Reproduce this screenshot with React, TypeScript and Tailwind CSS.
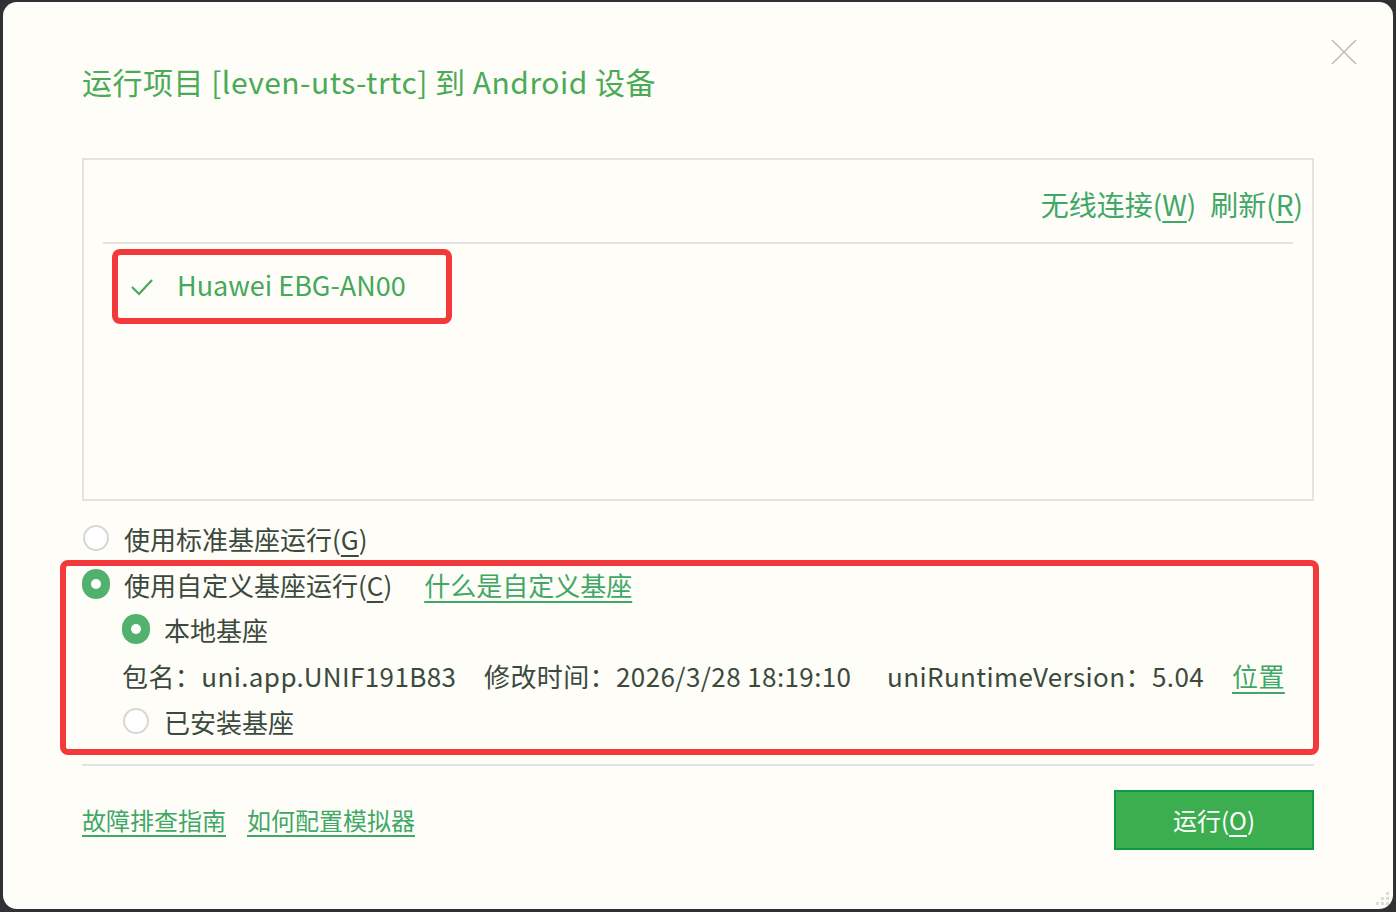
import React from "react";

const font = {
  fontFamily: '"Noto Sans CJK SC", "Microsoft YaHei", "Noto Sans", sans-serif',
};

function Radio({ checked }: { checked?: boolean }) {
  return (
    <div className="w-[28px] h-[30px] flex items-center justify-center shrink-0">
      {checked ? (
        <div className="w-[30px] h-[30px] rounded-full bg-[#53b16e] flex items-center justify-center">
          <div className="w-[10px] h-[10px] rounded-full bg-white" />
        </div>
      ) : (
        <div className="w-[26px] h-[26px] rounded-full border-2 border-[#d6d6d6] bg-white" />
      )}
    </div>
  );
}

export default function App() {
  return (
    <div
      className="w-[1396px] h-[912px] bg-[#2f3134] pt-[2px] pl-[3px] pr-[3px] pb-[3px]"
      style={font}
    >
      <div className="relative h-full rounded-[14px] bg-[#fefdf8] px-[79px] text-[#3b4a3d]">
        {/* close */}
        <button className="absolute top-[36px] right-[35px] w-[28px] h-[28px]">
          <svg viewBox="0 0 28 28" className="w-[28px] h-[28px]">
            <path d="M2 2 L26 26 M26 2 L2 26" stroke="#bdbdbd" strokeWidth="1.6" fill="none" />
          </svg>
        </button>

        {/* title */}
        <div className="pt-[59px] h-[101px] leading-[40px] text-[30px] tracking-[0.5px] text-[#4aab56] whitespace-nowrap">
          运行项目 [leven-uts-trtc] 到 Android 设备
        </div>

        {/* device list */}
        <div className="mt-[55px] h-[343px] border-2 border-[#e3e3e3]">
          <div className="pt-[24px] pr-[9px] flex justify-end gap-[14px] text-[28px] leading-[40px] text-[#3fa866]">
            <span>
              无线连接(<span className="underline underline-offset-[5px]">W</span>)
            </span>
            <span>
              刷新(<span className="underline underline-offset-[5px]">R</span>)
            </span>
          </div>
          <div className="mt-[18px] mx-[19px] h-[2px] bg-[#e3e3e3]" />
          <div className="mt-[5px] ml-[28px] w-[340px] h-[75px] border-[6px] border-[#f4393a] rounded-[8px] flex items-center">
            <svg viewBox="0 0 24 20" className="ml-[12px] w-[24px] h-[20px]">
              <path d="M2 10 L9 17 L22 3" stroke="#45a85a" strokeWidth="2.2" fill="none" />
            </svg>
            <span className="ml-[23px] text-[27px] text-[#45a85a] leading-[40px] -mt-[4px]">Huawei EBG-AN00</span>
          </div>
        </div>

        {/* base options */}
        <div className="mt-[14px] h-[46px] flex items-center gap-[14px] text-[26px]">
          <Radio />
          <span>
            使用标准基座运行(<span className="underline underline-offset-[5px]">G</span>)
          </span>
        </div>

        <div className="-mt-[1px] -ml-[22px] -mr-[5px] h-[195px] border-[6px] border-[#f4393a] rounded-[8px] pl-[16px] text-[26px]">
          <div className="h-[42px] flex items-start">
            <div className="h-[36px] flex items-center gap-[14px]">
              <Radio checked />
              <span>
                使用自定义基座运行(<span className="underline underline-offset-[5px]">C</span>)
              </span>
              <span className="ml-[18px] text-[#3fa866] underline underline-offset-[5px]">什么是自定义基座</span>
            </div>
          </div>
          <div className="h-[46px] flex items-center gap-[14px] pl-[40px] -mt-[2px]">
            <Radio checked />
            <span>本地基座</span>
          </div>
          <div className="h-[46px] flex items-center pl-[40px] whitespace-nowrap tracking-[0.4px]">
            <span className="w-[330px] shrink-0">包名：uni.app.UNIF191B83</span>
            <span className="ml-[32px] w-[370px] shrink-0">修改时间：2026/3/28 18:19:10</span>
            <span className="ml-[33px] w-[314px] shrink-0">uniRuntimeVersion：5.04</span>
            <span className="ml-[31px] text-[#3fa866] underline underline-offset-[5px]">位置</span>
          </div>
          <div className="h-[46px] flex items-center gap-[14px] pl-[40px]">
            <Radio />
            <span>已安装基座</span>
          </div>
        </div>

        <div className="mt-[9px] h-[2px] bg-[#e3e3e3]" />

        {/* footer */}
        <div className="mt-[24px] flex items-center justify-between">
          <div className="flex items-center gap-[21px] text-[24px] text-[#3fa866]">
            <span className="underline underline-offset-[5px]">故障排查指南</span>
            <span className="underline underline-offset-[5px]">如何配置模拟器</span>
          </div>
          <button className="w-[200px] h-[60px] bg-[#3cae50] border-2 border-[#119a46] text-white text-[24px]">
            运行(<span className="underline underline-offset-[5px]">O</span>)
          </button>
        </div>

        {/* resize grip */}
        <svg viewBox="0 0 14 14" className="absolute right-[3px] bottom-[3px] w-[14px] h-[14px]">
          <rect x="10" y="0" width="3" height="3" fill="#dcdcdc" />
          <rect x="5" y="5" width="3" height="3" fill="#dcdcdc" />
          <rect x="10" y="5" width="3" height="3" fill="#dcdcdc" />
          <rect x="0" y="10" width="3" height="3" fill="#dcdcdc" />
          <rect x="5" y="10" width="3" height="3" fill="#dcdcdc" />
          <rect x="10" y="10" width="3" height="3" fill="#dcdcdc" />
        </svg>
      </div>
    </div>
  );
}
